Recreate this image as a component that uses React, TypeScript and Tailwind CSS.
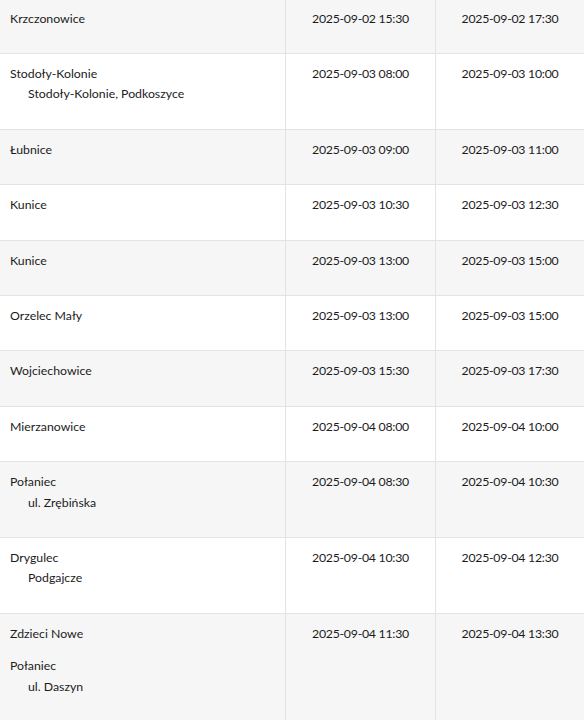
type Stop = { place: string; details?: string[] };
type Row = { stops: Stop[]; start: string; end: string };

const rows: Row[] = [
  { stops: [{ place: "Krzczonowice" }], start: "2025-09-02 15:30", end: "2025-09-02 17:30" },
  {
    stops: [{ place: "Stodoły-Kolonie", details: ["Stodoły-Kolonie, Podkoszyce"] }],
    start: "2025-09-03 08:00",
    end: "2025-09-03 10:00",
  },
  { stops: [{ place: "Łubnice" }], start: "2025-09-03 09:00", end: "2025-09-03 11:00" },
  { stops: [{ place: "Kunice" }], start: "2025-09-03 10:30", end: "2025-09-03 12:30" },
  { stops: [{ place: "Kunice" }], start: "2025-09-03 13:00", end: "2025-09-03 15:00" },
  { stops: [{ place: "Orzelec Mały" }], start: "2025-09-03 13:00", end: "2025-09-03 15:00" },
  { stops: [{ place: "Wojciechowice" }], start: "2025-09-03 15:30", end: "2025-09-03 17:30" },
  { stops: [{ place: "Mierzanowice" }], start: "2025-09-04 08:00", end: "2025-09-04 10:00" },
  {
    stops: [{ place: "Połaniec", details: ["ul. Zrębińska"] }],
    start: "2025-09-04 08:30",
    end: "2025-09-04 10:30",
  },
  {
    stops: [{ place: "Drygulec", details: ["Podgajcze"] }],
    start: "2025-09-04 10:30",
    end: "2025-09-04 12:30",
  },
  {
    stops: [{ place: "Zdzieci Nowe" }, { place: "Połaniec", details: ["ul. Daszyn"] }],
    start: "2025-09-04 11:30",
    end: "2025-09-04 13:30",
  },
];

const App = () => {
  return (
    <div
      className="w-[584px] h-[720px] overflow-hidden bg-white text-[#1c1c1c] text-[12.3px] leading-[20.4px]"
      style={{ fontFamily: "Lato, 'Open Sans', sans-serif" }}
    >
      <div className="-mt-[2.4px]">
        {rows.map((row, i) => (
          <div
            key={i}
            className={
              "grid grid-cols-[286px_150px_148px] border-t border-[#e3e3e3] " +
              (i % 2 === 0 ? "bg-[#f6f6f6]" : "bg-white")
            }
          >
            <div className="pl-[10px] pt-[10px] pb-[12px] border-r border-[#e3e3e3]">
              {row.stops.map((s, j) => (
                <div key={j} className="mb-[12px]">
                  <div>{s.place}</div>
                  {s.details?.map((d) => (
                    <div key={d} className="pl-[18px]">
                      {d}
                    </div>
                  ))}
                </div>
              ))}
            </div>
            <div className="pt-[10px] text-center tracking-[-0.25px] border-r border-[#e3e3e3]">
              {row.start}
            </div>
            <div className="pt-[10px] text-center tracking-[-0.25px]">{row.end}</div>
          </div>
        ))}
      </div>
    </div>
  );
};

export default App;
